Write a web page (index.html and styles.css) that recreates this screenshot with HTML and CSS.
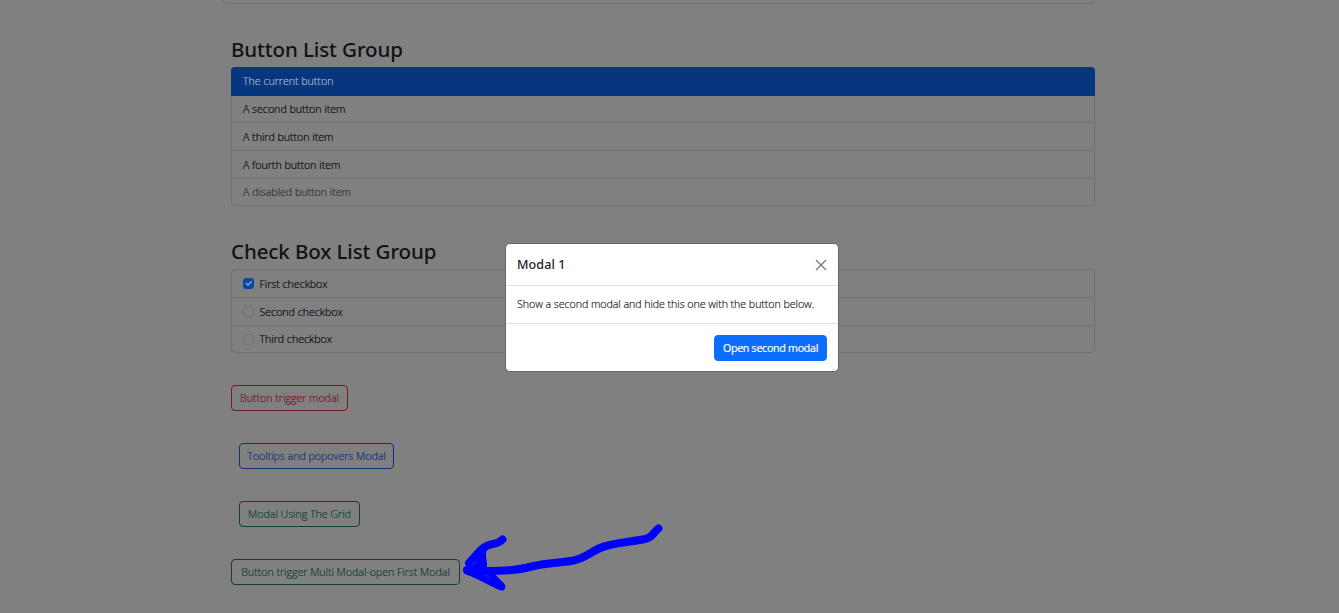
FILE: index.html
```
<!DOCTYPE html>
<html lang="en">
<head>
<meta charset="utf-8">
<title>List groups and modals</title>
<link rel="stylesheet" href="styles.css">
</head>
<body>
<main class="page">
  <div class="card-end"></div>
  <section class="group">
    <h2 class="title">Button List Group</h2>
    <div class="list">
      <button class="item active">The current button</button>
      <button class="item second">A second button item</button>
      <button class="item">A third button item</button>
      <button class="item">A fourth button item</button>
      <button class="item disabled">A disabled button item</button>
    </div>
  </section>
  <section class="group checks">
    <h2 class="title">Check Box List Group</h2>
    <div class="list">
      <label class="item"><svg class="box on" viewBox="0 0 20 20"><path d="M6 10l3 3 6-6"/></svg>First checkbox</label>
      <label class="item"><span class="box"></span>Second checkbox</label>
      <label class="item"><span class="box"></span>Third checkbox</label>
    </div>
  </section>
  <div class="actions">
    <button class="btn red w1">Button trigger modal</button>
    <button class="btn blue inset w2">Tooltips and popovers Modal</button>
    <button class="btn green inset w3">Modal Using The Grid</button>
    <button class="btn green w4">Button trigger Multi Modal-open First Modal</button>
  </div>
</main>
<div class="modal" role="dialog">
  <header class="modal-head">
    <h5 class="modal-title">Modal 1</h5>
    <svg class="close" viewBox="0 0 12 12"><path d="M1 1l10 10M11 1L1 11"/></svg>
  </header>
  <p class="modal-body">Show a second modal and hide this one with the button below.</p>
  <footer class="modal-foot"><button class="btn primary">Open second modal</button></footer>
</div>
<svg class="arrow" viewBox="455 515 220 85">
  <path class="fill" d="M484 547L487 568L496 571L493 580L468 573L466 564Z"/>
  <path class="stroke" d="M658.500 528.500C652 534 652 538 643 539.500C622 543 611 543 600 548C587 554 584 559 571 561C557 563 546 563 534 566C519 570 508 571 484 571L467 570"/>
  <path class="stroke" d="M502.500 539.500C496 546 491 542 484 547.500C477 553 475 557 469 563"/>
  <path class="stroke" d="M483 549C480 556 484 561 483 568"/>
  <path class="stroke" d="M468 571C482 576 492 583 501.500 586.500L492 577"/>
  <path class="glint" d="M472 565.500l4-4M486 575.500l3 .8"/>
</svg>
</body>
</html>
```
FILE: styles.css
```
* { box-sizing: border-box; }
html, body { height: 100%; overflow: hidden; }
body {
  margin: 0;
  background: #808080;
  color: #08090a;
  font-family: "Open Sans", "Noto Sans", sans-serif;
  font-size: 10.67px;
  font-weight: 300;
  letter-spacing: -0.03px;
  line-height: 16px;
  -webkit-text-stroke-width: 0.2px;
}
button { font: inherit; letter-spacing: inherit; color: inherit; background: none; border: 0; white-space: nowrap; }
.page { width: 864px; margin-left: 231px; }
.card-end { height: 4px; margin: 0 0 0 -8px; width: 872px; border: 1px solid #707070; border-top: 0; border-radius: 0 0 4px 4px; }
.group { padding-top: 32px; }
.title { margin: 0 0 4px; height: 27px; line-height: 26px; font-family: "Noto Sans", sans-serif; font-size: 20.500px; font-weight: 500; letter-spacing: -0.1px; color: #101214; white-space: nowrap; -webkit-text-stroke-width: 0; }
.list { display: flex; flex-direction: column; border: 1px solid #707070; border-radius: 4px; height: 139px; }
.checks .list { height: 84px; }
.item { flex: 0 0 28px; display: flex; align-items: center; width: 100%; padding: 0 11px; text-align: left; border-bottom: 1px solid #707070; }
.item:last-child { flex-basis: 26px; border-bottom: 0; }
.second { flex-basis: 27px; }
.active { flex-basis: 29px; margin: -1px -1px 0; width: calc(100% + 2px); padding: 0 12px; background: #06377e; color: #a9b4c4; border-color: #06377e; border-radius: 4px 4px 0 0; }
.disabled { color: #303336; }
.box { width: 11px; height: 11px; margin-right: 5.500px; border: 1px solid #727272; border-radius: 3px; }
.on { border: 0; background: #0848a8; fill: none; stroke: #a0a8b4; stroke-width: 2.500; stroke-linecap: round; }
.actions { display: flex; flex-direction: column; align-items: flex-start; gap: 32px; padding-top: 32px; }
.btn { height: 26px; border: 1px solid; border-radius: 4px; padding: 0; text-align: center; }
.inset { margin-left: 8px; }
.red { color: #6e1b23; }
.blue { color: #132f7e; }
.green { color: #0d442b; }
.w1 { width: 117px; }
.w2 { width: 155px; }
.w3 { width: 121px; }
.w4 { width: 229px; }
.modal { position: absolute; left: 505px; top: 243px; width: 334px; height: 129px; background: #fff; border: 1px solid #666; border-radius: 5px; color: #212529; }
.modal-head { height: 42px; display: flex; align-items: center; justify-content: space-between; padding: 0 11px; border-bottom: 1px solid #dee2e6; }
.modal-title { margin: 0; font-family: "Noto Sans", sans-serif; font-size: 12.500px; font-weight: 500; letter-spacing: 0.1px; -webkit-text-stroke-width: 0; }
.close { width: 12px; height: 12px; fill: none; stroke: #777; stroke-width: 1.300; }
.modal-body { margin: 0; height: 38px; display: flex; align-items: center; padding: 0 11px 2px; border-bottom: 1px solid #dee2e6; white-space: nowrap; letter-spacing: -0.06px; }
.modal-foot { height: 48px; display: flex; align-items: center; justify-content: flex-end; padding: 0 11px; }
.primary { width: 113px; background: #0d6efd; border-color: #0d6efd; color: #fff; font-weight: 400; letter-spacing: -0.28px; }
.arrow { position: absolute; left: 455px; top: 515px; width: 220px; height: 85px; }
.fill { fill: #00f; }
.stroke { fill: none; stroke: #00f; stroke-width: 8; stroke-linecap: round; stroke-linejoin: round; }
.glint { stroke: #4646c8; stroke-width: 0.8; }
```
